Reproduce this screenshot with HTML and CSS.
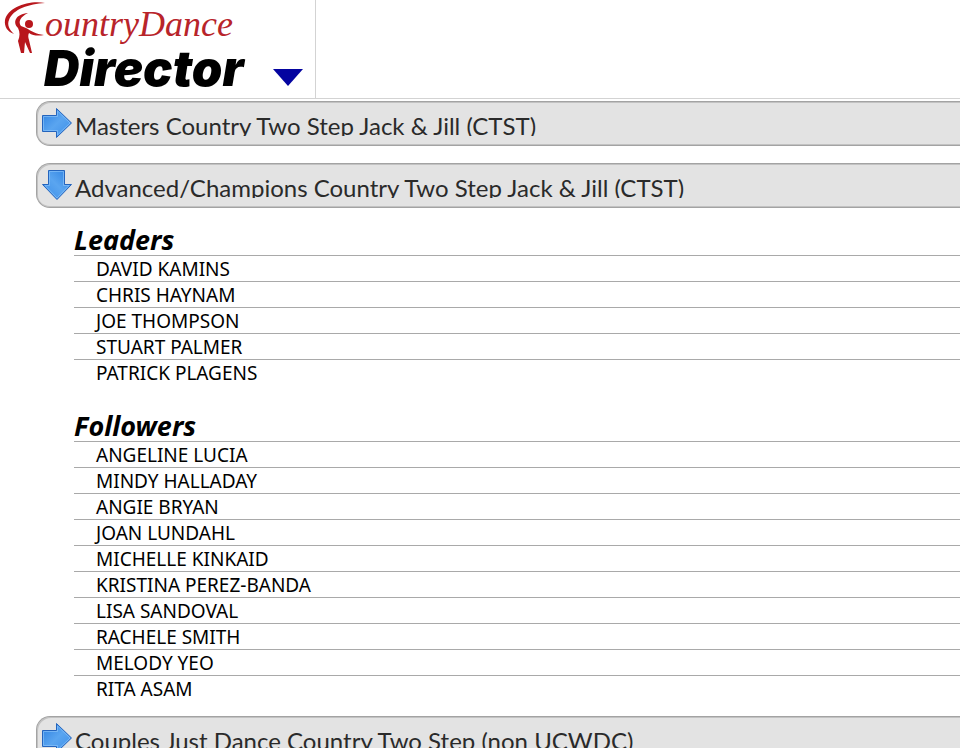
FILE: index.html
```html
<!DOCTYPE html>
<html lang="en">
<head>
<meta charset="utf-8">
<title>CountryDance Director</title>
<link rel="stylesheet" href="styles.css">
</head>
<body>
<svg class="defs" aria-hidden="true">
  <defs>
    <linearGradient id="blue" x1="0" y1="0" x2="1" y2="1">
      <stop offset="0" stop-color="#2b7fe0"/>
      <stop offset=".5" stop-color="#5aa5f0"/>
      <stop offset="1" stop-color="#3b8de8"/>
    </linearGradient>
    <symbol id="arrow" viewBox="0 0 32 32">
      <path d="M1.500 8.500H15.500V1.500L30.500 16 15.500 30.500V24.500H1.500Z" fill="url(#blue)" stroke="#2464bd" stroke-linejoin="round"/>
      <path d="M2.500 23.500V9.500H16.500V4L29 16 16.500 28V23.500Z" fill="none" stroke="#8cc5fa" stroke-opacity=".65"/>
    </symbol>
  </defs>
</svg>
<header class="header">
  <div class="brand">
    <svg class="logo" viewBox="0 0 250 92" role="img" aria-label="CountryDance Director">
      <g fill="#b8161c">
        <path d="M45 3C29 0 8 7 5 20C4 27 8 32 14 34C9 29 7 25 9 20C13 9 29 4 45 3Z"/>
        <path d="M28 13C16 14 12 22 18 28C20 32 20 36 18 41L21 53H24L25 42L30 53H32L29 40C28 37 28 35 29 33C33 36 39 36 44 35C36 34 31 31 26 28L21 26C18 22 20 17 28 13Z"/>
        <circle cx="29" cy="24" r="4"/>
      </g>
      <text class="logo-script" x="45" y="36">ountryDance</text>
      <text class="logo-name" x="44" y="86">Director</text>
    </svg>
    <button class="menu" aria-label="Open menu"><svg viewBox="0 0 30 17"><path d="M0 0H30L15 17Z" fill="#0404a0"/></svg></button>
  </div>
</header>
<main class="content">
  <button class="bar"><svg class="icon"><use href="#arrow"/></svg><span class="title">Masters Country Two Step Jack &amp; Jill (CTST)</span></button>
  <button class="bar" aria-expanded="true"><svg class="icon icon-open"><use href="#arrow"/></svg><span class="title">Advanced/Champions Country Two Step Jack &amp; Jill (CTST)</span></button>
  <section class="panel">
    <h2>Leaders</h2>
    <ul>
      <li>DAVID KAMINS</li>
      <li>CHRIS HAYNAM</li>
      <li>JOE THOMPSON</li>
      <li>STUART PALMER</li>
      <li>PATRICK PLAGENS</li>
    </ul>
    <h2>Followers</h2>
    <ul>
      <li>ANGELINE LUCIA</li>
      <li>MINDY HALLADAY</li>
      <li>ANGIE BRYAN</li>
      <li>JOAN LUNDAHL</li>
      <li>MICHELLE KINKAID</li>
      <li>KRISTINA PEREZ-BANDA</li>
      <li>LISA SANDOVAL</li>
      <li>RACHELE SMITH</li>
      <li>MELODY YEO</li>
      <li>RITA ASAM</li>
    </ul>
  </section>
  <button class="bar"><svg class="icon"><use href="#arrow"/></svg><span class="title">Couples Just Dance Country Two Step (non UCWDC)</span></button>
</main>
</body>
</html>
```
FILE: styles.css
```css
* { box-sizing: border-box; }
html { scrollbar-width: none; }
body {
  margin: 0;
  background: #fff;
  color: #000;
  font-family: "Trebuchet MS", "Noto Sans", sans-serif;
}
.defs { position: absolute; width: 0; height: 0; }
.header { border-bottom: 1px solid #d3d3d3; }
.brand {
  display: flex;
  align-items: flex-start;
  width: 316px;
  height: 98px;
  border-right: 1px solid #d3d3d3;
}
.logo { width: 250px; height: 92px; }
.logo-script { font: italic 36px "Liberation Serif", serif; fill: #b8242a; }
.logo-name { font: italic 900 49px Inter, sans-serif; fill: #000; }
.menu {
  margin: 69px 0 0 23px;
  padding: 0;
  border: 0;
  background: none;
}
.menu svg { display: block; width: 30px; height: 17px; }
.content { padding: 2px 0 0 36px; }
.bar {
  display: flex;
  align-items: flex-start;
  width: 100%;
  height: 45px;
  margin: 0 0 17px;
  padding: 5px 0 0 4px;
  border: 1px solid #a3a3a3;
  border-right: 0;
  border-radius: 14px 0 0 14px;
  box-shadow: inset 1px 1px #c2c2c2, inset 0 -1px #c2c2c2;
  background: #e3e3e3;
  color: #2a2a2a;
  font-family: "Trebuchet MS", Lato, sans-serif;
  font-size: 24px;
  text-align: left;
}
.icon { flex: none; width: 32px; height: 32px; }
.icon-open { transform: rotate(90deg); }
.title {
  height: 29px;
  padding-left: 2px;
  line-height: 38px;
  overflow: hidden;
  white-space: nowrap;
}
.panel { padding: 0 0 15px 38px; }
h2 {
  margin: 0;
  font-size: 27px;
  font-style: italic;
  font-weight: 700;
  line-height: 30px;
}
ul { margin: 0 0 26px; padding: 0; list-style: none; }
ul:last-child { margin: 0; }
li {
  height: 26px;
  padding-left: 22px;
  border-top: 1px solid #a9a9a9;
  font-size: 19px;
  line-height: 26px;
}
```
